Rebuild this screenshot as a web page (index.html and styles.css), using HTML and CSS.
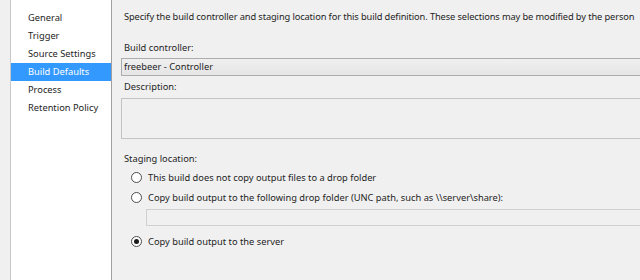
FILE: index.html
```html
<!DOCTYPE html>
<html>
<head>
<meta charset="utf-8">
<link rel="stylesheet" href="styles.css">
</head>
<body>
<div class="window">
  <nav class="nav">
    <div class="nav-item">General</div>
    <div class="nav-item">Trigger</div>
    <div class="nav-item">Source Settings</div>
    <div class="nav-item selected">Build Defaults</div>
    <div class="nav-item">Process</div>
    <div class="nav-item">Retention Policy</div>
  </nav>
  <main class="content">
    <div class="intro">Specify the build controller and staging location for this build definition. These selections may be modified by the person</div>
    <div class="label label-controller">Build controller:</div>
    <div class="combo">freebeer - Controller</div>
    <div class="label label-desc">Description:</div>
    <div class="desc-box"></div>
    <div class="label label-staging">Staging location:</div>
    <div class="radio-row row1"><span class="radio"></span><span>This build does not copy output files to a drop folder</span></div>
    <div class="radio-row row2"><span class="radio"></span><span>Copy build output to the following drop folder (UNC path, such as \\server\share):</span></div>
    <div class="path-box"></div>
    <div class="radio-row row3"><span class="radio checked"></span><span>Copy build output to the server</span></div>
  </main>
</div>
</body>
</html>
```
FILE: styles.css
```css
html, body {
  margin: 0;
  padding: 0;
  background: #f0f0f0;
  width: 640px;
  height: 280px;
  overflow: hidden;
}
.window {
  display: flex;
  height: 280px;
  font-family: "Noto Sans", "Open Sans", sans-serif;
  font-size: 9.3px;
  color: #1e1e1e;
}
.nav {
  margin-left: 10px;
  width: 100px;
  flex: none;
  background: #ffffff;
  border-left: 1px solid #c8c8c8;
  border-right: 1px solid #a0a0a0;
  padding-top: 9px;
  box-sizing: content-box;
}
.nav-item {
  height: 18px;
  line-height: 18px;
  padding-left: 17px;
  white-space: nowrap;
}
.nav-item.selected {
  background: #3399ff;
  color: #ffffff;
}
.content {
  flex: 1;
  min-width: 0;
  overflow: hidden;
  padding-left: 9px;
  display: flex;
  flex-direction: column;
}
.intro {
  white-space: nowrap;
  padding-left: 3px;
  margin-top: 10px;
  line-height: 14px;
  letter-spacing: -0.12px;
}
.label {
  padding-left: 3px;
  line-height: 14px;
  white-space: nowrap;
}
.label-controller { margin-top: 17px; }
.combo {
  margin-top: 3px;
  width: 560px;
  height: 16px;
  line-height: 16px;
  border: 1px solid #acacac;
  background: linear-gradient(#f0f0f0, #e5e5e5);
  padding-left: 2px;
  white-space: nowrap;
}
.label-desc { margin-top: 4px; }
.desc-box {
  margin-top: 4px;
  width: 560px;
  height: 39px;
  border: 1px solid #c4c4c4;
  background: #f0f0f0;
}
.label-staging { margin-top: 13px; }
.radio-row {
  display: flex;
  align-items: center;
  height: 14px;
  padding-left: 10px;
  white-space: nowrap;
}
.row1 { margin-top: 4px; }
.row2 { margin-top: 6px; }
.row3 { margin-top: 8px; }
.radio {
  width: 9px;
  height: 9px;
  border: 1px solid #4d4d4d;
  border-radius: 50%;
  background: #ffffff;
  margin-right: 6px;
  flex: none;
  position: relative;
}
.radio.checked::after {
  content: "";
  position: absolute;
  left: 2px;
  top: 2px;
  width: 5px;
  height: 5px;
  border-radius: 50%;
  background: #1a1a1a;
}
.path-box {
  margin-top: 5px;
  margin-left: 25px;
  width: 540px;
  height: 15px;
  border: 1px solid #d0d0d0;
  background: #f0f0f0;
}
```
